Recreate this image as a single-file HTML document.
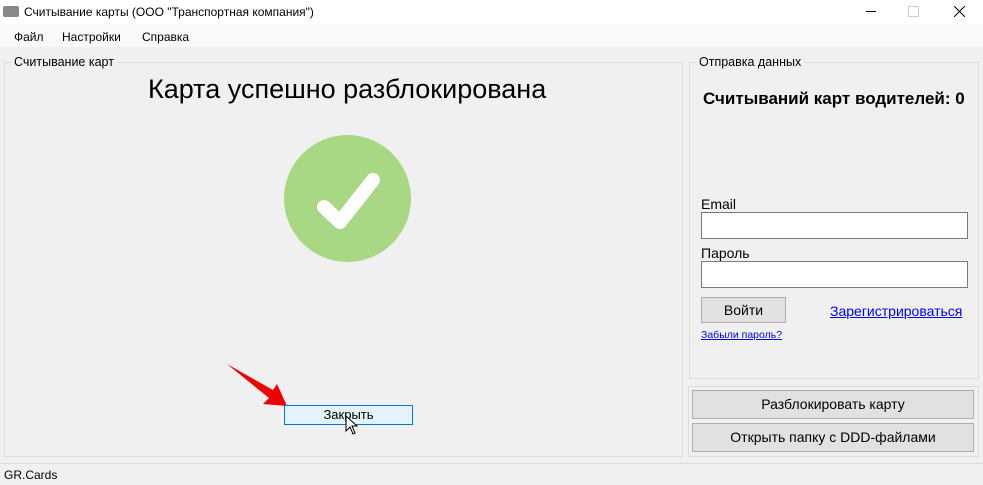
<!DOCTYPE html><html><head><meta charset="utf-8"><style>
body{margin:0;width:983px;height:485px;background:#f0f0f0;font-family:"Liberation Sans",sans-serif;font-size:12px;color:#000;position:relative;overflow:hidden}
.a{position:absolute}
.gb{position:absolute;border:1px solid #dcdcdc}
.leg{position:absolute;background:#f0f0f0;padding:0 3px;font-size:12.5px;top:-8px;left:6px}
.btn{position:absolute;background:#e1e1e1;border:1px solid #adadad;text-align:center;font-size:14px;box-sizing:border-box}
.inp{position:absolute;background:#fff;border:1px solid #7a7a7a;box-sizing:border-box}
a{color:#0000ff;text-decoration:underline}
</style></head><body>
<div class="a" style="left:0;top:0;width:983px;height:24px;background:#fff"></div>
<div class="a" style="left:3px;top:6px;width:16px;height:11px;background:#888;border-radius:2px"></div>
<div class="a" style="left:24px;top:5px;font-size:12px">Считывание карты (ООО "Транспортная компания")</div>
<div class="a" style="left:866px;top:11px;width:10px;height:1px;background:#000"></div>
<div class="a" style="left:908px;top:6px;width:9px;height:9px;border:1px solid #ccc"></div>
<svg class="a" style="left:954px;top:6px" width="11" height="11"><path d="M0 0L11 11M11 0L0 11" stroke="#000" stroke-width="1"/></svg>
<div class="a" style="left:0;top:24px;width:983px;height:23px;background:#f9f9f9"></div>
<div class="a" style="left:14px;top:30px;font-size:12px">Файл</div>
<div class="a" style="left:62px;top:30px;font-size:12px">Настройки</div>
<div class="a" style="left:142px;top:30px;font-size:12px">Справка</div>
<div class="gb" style="left:4px;top:62px;width:677px;height:393px"><span class="leg">Считывание карт</span></div>
<div class="a" style="left:148px;top:74px;font-size:27px">Карта успешно разблокирована</div>
<svg class="a" style="left:284px;top:135px" width="127" height="127"><circle cx="63.5" cy="63.5" r="63.5" fill="#a8d883"/><path d="M40 72 L56 87 L89 45" fill="none" stroke="#fff" stroke-width="14" stroke-linecap="round" stroke-linejoin="round"/></svg>
<svg class="a" style="left:225px;top:362px" width="70" height="50"><path d="M2 2 L48 28 L52 22 L62 44 L38 42 L44 36 Z" fill="#e00"/></svg>
<div class="a" style="left:284px;top:405px;width:129px;height:20px;box-sizing:border-box;background:#e5f1fb;border:1px solid #0078d7;text-align:center;font-size:13px;line-height:18px">Закрыть</div>
<svg class="a" style="left:345px;top:415px" width="16" height="22"><path d="M1 1 L1 16 L5 12 L8 19 L10 18 L7 11 L12 11 Z" fill="#fff" stroke="#000"/></svg>
<div class="gb" style="left:689px;top:62px;width:288px;height:315px"><span class="leg">Отправка данных</span></div>
<div class="a" style="left:703px;top:89px;font-size:17px;font-weight:bold">Считываний карт водителей: 0</div>
<div class="a" style="left:701px;top:196px;font-size:14px">Email</div>
<div class="inp" style="left:701px;top:212px;width:267px;height:27px"></div>
<div class="a" style="left:701px;top:245px;font-size:14px">Пароль</div>
<div class="inp" style="left:701px;top:261px;width:267px;height:27px"></div>
<div class="btn" style="left:701px;top:297px;width:85px;height:26px;line-height:24px">Войти</div>
<a class="a" style="left:830px;top:303px;font-size:14px">Зарегистрироваться</a>
<a class="a" style="left:701px;top:329px;font-size:10.5px">Забыли пароль?</a>
<div class="gb" style="left:688px;top:386px;width:289px;height:69px"></div>
<div class="btn" style="left:692px;top:390px;width:282px;height:29px;line-height:27px">Разблокировать карту</div>
<div class="btn" style="left:692px;top:423px;width:282px;height:29px;line-height:27px">Открыть папку с DDD-файлами</div>
<div class="a" style="left:0;top:463px;width:983px;height:1px;background:#dcdcdc"></div>
<div class="a" style="left:4px;top:468px">GR.Cards</div>
</body></html>
